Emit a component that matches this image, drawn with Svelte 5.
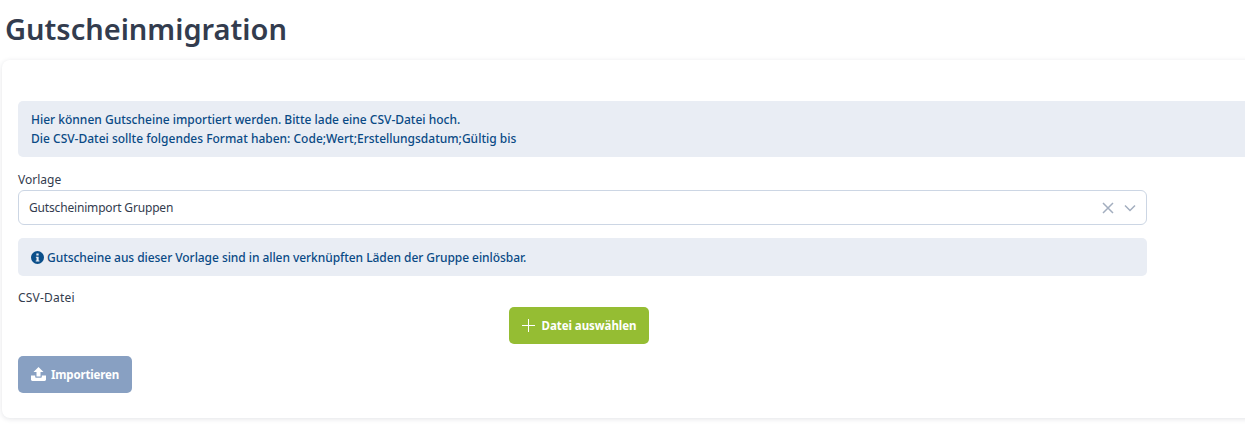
<script lang="ts">
    let template = $state('Gutscheinimport Gruppen');
</script>

<div class="page">
    <h1>Gutscheinmigration</h1>
    <div class="card">
        <div class="alert intro">
            <div>Hier können Gutscheine importiert werden. Bitte lade eine CSV-Datei hoch.</div>
            <div>Die CSV-Datei sollte folgendes Format haben: Code;Wert;Erstellungsdatum;Gültig bis</div>
        </div>
        <div class="form">
            <div class="label first">Vorlage</div>
            <div class="select">
                <span class="value">{template}</span>
                <svg class="clear" width="12" height="12" viewBox="0 0 12 12" aria-hidden="true">
                    <path d="M1 1l10 10M11 1L1 11" stroke="#a3aebf" stroke-width="1.5" fill="none" />
                </svg>
                <svg class="chev" width="12" height="8" viewBox="0 0 12 8" aria-hidden="true">
                    <path d="M1 1.500l5 5 5-5" stroke="#a3aebf" stroke-width="1.500" fill="none" />
                </svg>
            </div>
            <div class="alert hint">
                <svg width="13" height="13" viewBox="0 0 16 16" aria-hidden="true">
                    <path fill="#0b4f8a" fill-rule="evenodd" d="M8 0a8 8 0 1 1 0 16A8 8 0 0 1 8 0zM6.600 3.200h2.800v2.400H6.600zM6 7h3.400v4.600h1V13H5.800v-1.400h1V8.400H6z" />
                </svg>
                <span>Gutscheine aus dieser Vorlage sind in allen verknüpften Läden der Gruppe einlösbar.</span>
            </div>
            <div class="label csv">CSV-Datei</div>
            <div class="upload">
                <button class="btn green">
                    <svg width="13" height="13" viewBox="0 0 13 13" aria-hidden="true">
                        <path d="M6.500 0v13M0 6.500h13" stroke="#fff" stroke-width="1" fill="none" />
                    </svg>
                    Datei auswählen
                </button>
            </div>
        </div>
        <button class="btn import" disabled>
            <svg class="up" width="15" height="14" viewBox="0 0 15 14" aria-hidden="true">
                <path fill="#fff" d="M7.500 0L12.500 5H9.500V9.400H5.500V5H2.500zM0 8.400h4.200v1.300c0 .7.500 1.100 1.100 1.100h4.400c.6 0 1.100-.4 1.100-1.100V8.400H15v4.200c0 .8-.6 1.400-1.400 1.400H1.400C.6 14 0 13.400 0 12.600z" />
            </svg>
            <span class="tight">Importieren</span>
        </button>
    </div>
</div>

<style>
    :global(body) { background: #fff; overflow: hidden; }
    .page { font-family: "Noto Sans", "Open Sans", sans-serif; font-size: 12px; color: #333c4e; padding: 0 0 0 2px; height: 432px; box-sizing: border-box; overflow: hidden; }
    h1 { margin: 0 0 0 3px; height: 60px; line-height: 58px; font-size: 29px; font-weight: 600; color: #333c4e; }
    .card { background: #fff; border-radius: 8px 0 0 8px; box-shadow: 0 1px 5px rgba(40, 50, 70, 0.13); padding: 41px 0 25px 16px; height: 358px; box-sizing: border-box; width: 1260px; }
    .alert { background: #e9edf4; color: #0a4a85; border-radius: 5px; box-sizing: border-box; font-weight: 500; }
    .intro { height: 56px; padding: 9px 13px; line-height: 19px; }
    .form { width: 1129px; }
    .label { height: 17px; line-height: 17px; color: #333c4e; }
    .first { margin-top: 14px; margin-bottom: 2px; }
    .csv { margin-top: 13px; letter-spacing: 0.2px; }
    .select { height: 35px; box-sizing: border-box; border: 1px solid #ccd6e4; border-radius: 6px; display: flex; align-items: center; padding: 0 10px; gap: 10px; }
    .value { flex: 1; letter-spacing: -0.17px; }
    .hint { margin-top: 13px; height: 38px; display: flex; align-items: center; gap: 3px; padding: 0 13px; letter-spacing: -0.06px; }
    .upload { display: flex; justify-content: center; margin-top: 1px; padding-right: 7px; }
    .btn { font: inherit; font-size: 11.500px; font-weight: 700; color: #fff; border: 0; border-radius: 5px; height: 37px; display: inline-flex; align-items: center; justify-content: center; box-sizing: border-box; }
    .green { background: #95bd33; width: 140px; gap: 7px; letter-spacing: -0.05px; }
    .import { background: #88a0c2; width: 114px; gap: 5px; margin-top: 12px; }
    .up { margin-top: -2px; }
    .tight { letter-spacing: -0.15px; }
</style>
